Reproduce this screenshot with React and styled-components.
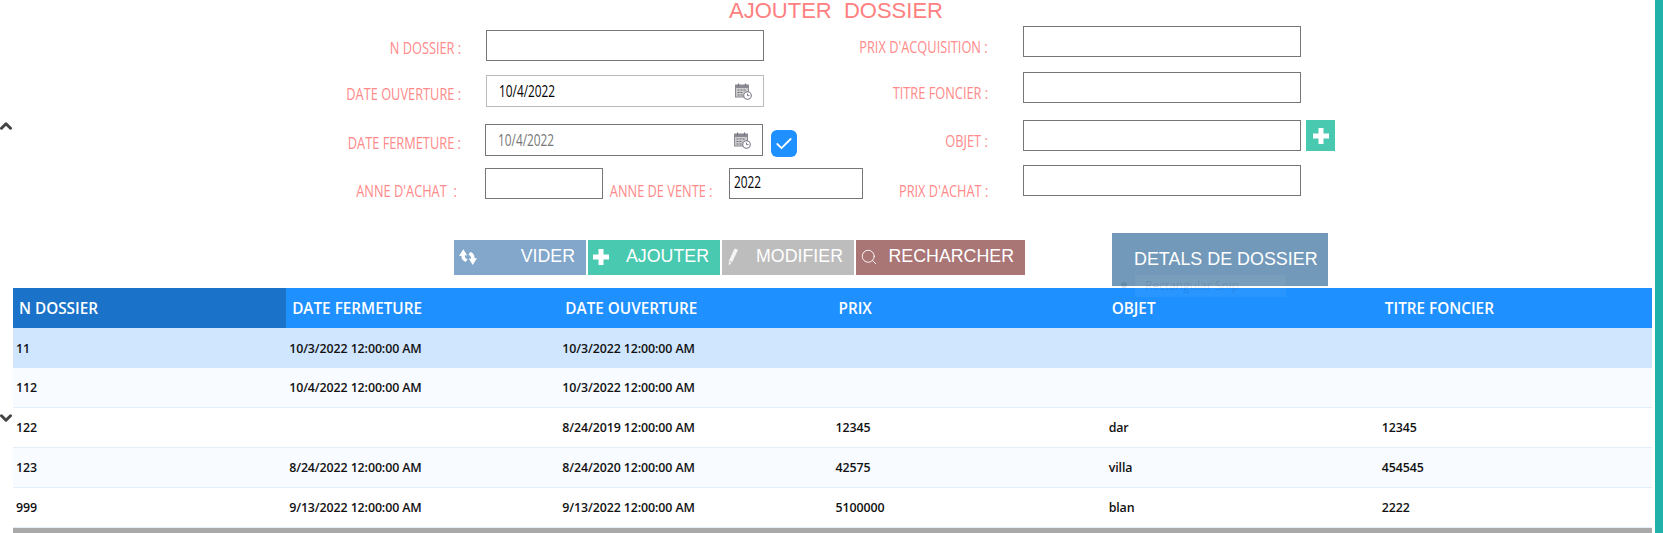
import React from "react";
import styled, { createGlobalStyle } from "styled-components";
import { ChevronUp, ChevronDown, Check, Search } from "lucide-react";

const Global = createGlobalStyle`
  html, body { margin: 0; padding: 0; background: #fff; overflow: hidden; }
  * { box-sizing: border-box; }
`;

const Page = styled.div`
  position: relative;
  width: 1663px;
  height: 533px;
  overflow: hidden;
  padding-right: 8px;
`;
const SideBar = styled.div`
  position: absolute; top: 0; right: 0; bottom: 0; width: 8px; background: #20b2aa;
`;
const Collapse = styled.div`
  position: absolute; left: -3px; top: ${p => p.$top}px; color: #444; line-height: 0;
`;
const Title = styled.h1`
  margin: 0; height: 26px; padding-left: 17px; text-align: center;
  font: 400 22px/22px "Liberation Sans", Arial, sans-serif; color: #ff8080; white-space: pre;
`;
const Form = styled.div`
  display: flex; height: 207px; padding-left: 340px;
`;
const LeftCol = styled.div`width: 530px; display: flex; flex-direction: column;`;
const RightCol = styled.div`width: 470px; display: flex; flex-direction: column;`;
const Row = styled.div`
  display: flex; align-items: flex-start; margin-top: ${p => p.$mt || 0}px;
`;
const Label = styled.label`
  display: flex; justify-content: flex-end;
  font: 400 16.5px/18px "Open Sans", sans-serif; color: #ff8a8a; white-space: pre;
  width: ${p => p.$w}px; padding-top: ${p => p.$pt}px; margin-right: ${p => p.$mr}px; flex: none;
`;
const LabelText = styled.span`
  display: inline-block; flex: none; transform: scaleX(.775); transform-origin: right center;
`;
const ValueText = styled.span`
  display: inline-block; transform: scaleX(.76); transform-origin: left center;
  font: 400 15.6px "Open Sans", sans-serif;
`;
const Field = styled.div`
  width: ${p => p.$w || 278}px; height: ${p => p.$h || 31}px; flex: none;
  border: 1px solid #767676; background: #fff; padding: 0 0 3px 4px; color: #000;
  display: flex; align-items: center;
`;
const DateBox = styled.div`
  width: 278px; height: 32px; flex: none; display: flex; align-items: center;
  justify-content: space-between; padding: 0 11px 0 12px;
  border: 1px solid ${p => (p.$muted ? "#767676" : "#bbb")}; margin-left: ${p => (p.$muted ? -1 : 0)}px;
  color: ${p => (p.$muted ? "#777" : "#000")};
`;
const Tick = styled.div`
  width: 26px; height: 27px; margin: 6px 0 0 8px; border-radius: 6px; background: #1e90ff;
  display: flex; align-items: center; justify-content: center; color: #fff;
`;
const AddBtn = styled.div`
  width: 29px; height: 31px; margin-left: 5px; background: #48c9b0;
  display: flex; align-items: center; justify-content: center;
`;
const Actions = styled.div`
  display: flex; align-items: flex-start; height: 53px; margin-bottom: 2px; padding-left: 454px;
`;
const ActionBtn = styled.div`
  width: ${p => p.$w}px; height: 35px; margin: 7px 2px 0 0; flex: none;
  background: ${p => p.$bg}; color: #fff; display: flex; align-items: center;
  justify-content: space-between; padding: 0 ${p => p.$pr}px 2px ${p => p.$pl}px;
  font: 400 17.8px "Liberation Sans", Arial, sans-serif;
`;
const DetailsBtn = styled.div`
  position: relative; width: 216px; height: 53px; margin-left: 85px; background: #7299b9; color: #fff;
  padding: 15px 0 0 22px; font: 400 17.9px/22px "Liberation Sans", Arial, sans-serif; white-space: nowrap;
`;
const SnipHint = styled.div`
  position: absolute; left: 23px; top: 42px; width: 151px; height: 22px; padding-left: 10px;
  background: rgba(255,255,255,.05); color: rgba(0,30,60,.13);
  font: 400 12px/22px "Open Sans", sans-serif; z-index: 2;
`;
const SnipDot = styled.div`
  position: absolute; left: 9px; top: 49px; width: 6px; height: 6px; border-radius: 50%;
  background: rgba(0,30,60,.12); z-index: 2;
`;
const Table = styled.div`margin-left: 13px; width: 1639px;`;
const GridRow = styled.div`
  display: grid; grid-template-columns: repeat(6, 1fr); height: 40px; align-items: center;
  background: ${p => p.$bg}; border-bottom: ${p => (p.$line ? "1px solid #e3eefb" : "none")};
  font: 600 12.4px "Open Sans", sans-serif; color: #111; letter-spacing: -.1px;
`;
const Body = styled.div`padding-left: 3px; white-space: nowrap;`;
const HeadRow = styled(GridRow)`
  background: #1e90ff; color: #fff; font-size: 15.3px; letter-spacing: 0;
`;
const Head = styled.div`
  height: 100%; display: flex; align-items: center; padding: 0 0 0 6px;
  background: ${p => (p.$active ? "#1a73c9" : "transparent")};
`;
const Scroll = styled.div`height: 5px; margin-left: 13px; width: 1639px; background: #a9a9a9;`;

const CalIcon = () => (
  <svg width="17" height="17" viewBox="0 0 17 17">
    <rect x="0.5" y="2" width="13" height="12" fill="#ccc" stroke="#8a8a92" />
    <rect x="0.5" y="2" width="13" height="3" fill="#8a8a92" />
    <path d="M3.5 0.5v3M10.5 0.5v3" stroke="#77777f" strokeWidth="1.2" />
    <path d="M2.5 7h2M5.5 7h2M8.5 7h2M2.5 9.5h2M5.5 9.5h2M2.5 12h2M5.5 12h2" stroke="#6f6f78" />
    <circle cx="12.5" cy="12.5" r="3.8" fill="#fff" stroke="#77778a" strokeWidth="1.1" />
    <path d="M12.5 10.5v2.2h2" fill="none" stroke="#77778a" />
  </svg>
);
const Plus = ({ size, bar }) => (
  <svg width={size} height={size} viewBox="0 0 16 16">
    <path d="M8 0v16M0 8h16" stroke="#fff" strokeWidth={bar} />
  </svg>
);
const Refresh = () => (
  <svg width="18" height="18" viewBox="0 0 16 16" fill="#fff">
    <path d="M0 7 3.8 1 7.4 6.6 5.2 6.4C5 8 6 9.4 7.6 10L6 12.4C3.4 11.6 2 9.6 2.2 6.8Z" />
    <path d="M16 9 12.2 15 8.6 9.4 10.8 9.6C11 8 10 6.6 8.4 6L10 3.6C12.6 4.4 14 6.4 13.8 9.2Z" />
  </svg>
);
const Pencil = () => (
  <svg width="11" height="18" viewBox="0 0 11 18">
    <path d="M6.6 0.5 10 1.8 4 14.6 0.8 17.5 0.8 13Z" fill="#fff" opacity=".85" />
    <path d="M1.2 13.2 4 14.6" stroke="#bdbdbd" />
  </svg>
);

const rows = [
  ["11", "10/3/2022 12:00:00 AM", "10/3/2022 12:00:00 AM", "", "", ""],
  ["112", "10/4/2022 12:00:00 AM", "10/3/2022 12:00:00 AM", "", "", ""],
  ["122", "", "8/24/2019 12:00:00 AM", "12345", "dar", "12345"],
  ["123", "8/24/2022 12:00:00 AM", "8/24/2020 12:00:00 AM", "42575", "villa", "454545"],
  ["999", "9/13/2022 12:00:00 AM", "9/13/2022 12:00:00 AM", "5100000", "blan", "2222"],
];
const rowBg = ["#d0e6fe", "#f8fbff", "#fff", "#f8fbff", "#fff"];
const heads = ["N DOSSIER", "DATE FERMETURE", "DATE OUVERTURE", "PRIX", "OBJET", "TITRE FONCIER"];

const FormLabel = ({ children, ...rest }) => (
  <Label {...rest}><LabelText>{children}</LabelText></Label>
);

export default function App() {
  return (
    <Page>
      <Global />
      <SideBar />
      <Collapse $top={117}><ChevronUp size={18} strokeWidth={4} /></Collapse>
      <Collapse $top={409}><ChevronDown size={18} strokeWidth={4} /></Collapse>
      <Title>{"AJOUTER  DOSSIER"}</Title>
      <Form>
        <LeftCol>
          <Row $mt={4}>
            <FormLabel $w={121} $pt={9} $mr={25}>N DOSSIER :</FormLabel>
            <Field />
          </Row>
          <Row $mt={14}>
            <FormLabel $w={121} $pt={10} $mr={25}>DATE OUVERTURE :</FormLabel>
            <DateBox><ValueText>10/4/2022</ValueText><CalIcon /></DateBox>
          </Row>
          <Row $mt={17}>
            <FormLabel $w={121} $pt={10} $mr={25}>DATE FERMETURE :</FormLabel>
            <DateBox $muted><ValueText>10/4/2022</ValueText><CalIcon /></DateBox>
            <Tick><Check size={20} strokeWidth={2.2} /></Tick>
          </Row>
          <Row $mt={11}>
            <FormLabel $w={117} $pt={14} $mr={28}>{"ANNE D'ACHAT  :"}</FormLabel>
            <Field $w={118} />
            <FormLabel $w={109} $pt={14} $mr={17}>ANNE DE VENTE :</FormLabel>
            <Field $w={134}><ValueText>2022</ValueText></Field>
          </Row>
        </LeftCol>
        <RightCol>
          <Row>
            <FormLabel $w={118} $pt={12} $mr={35}>{"PRIX D'ACQUISITION :"}</FormLabel>
            <Field />
          </Row>
          <Row $mt={15}>
            <FormLabel $w={118} $pt={12} $mr={35}>TITRE FONCIER :</FormLabel>
            <Field />
          </Row>
          <Row $mt={17}>
            <FormLabel $w={118} $pt={12} $mr={35}>OBJET :</FormLabel>
            <Field />
            <AddBtn><Plus size={16} bar={5} /></AddBtn>
          </Row>
          <Row $mt={14}>
            <FormLabel $w={118} $pt={17} $mr={35}>{"PRIX D'ACHAT :"}</FormLabel>
            <Field />
          </Row>
        </RightCol>
      </Form>
      <Actions>
        <ActionBtn $w={132} $bg="#82a7ca" $pl={5} $pr={11}><Refresh />VIDER</ActionBtn>
        <ActionBtn $w={132} $bg="#48c9b0" $pl={5} $pr={11}><Plus size={16} bar={5} />AJOUTER</ActionBtn>
        <ActionBtn $w={132} $bg="#bdbdbd" $pl={6} $pr={11}><Pencil />MODIFIER</ActionBtn>
        <ActionBtn $w={169} $bg="#a97575" $pl={4} $pr={11}><Search size={18} strokeWidth={1.2} />RECHARCHER</ActionBtn>
        <DetailsBtn>
          DETALS DE DOSSIER
          <SnipDot />
          <SnipHint>Rectangular Snip</SnipHint>
        </DetailsBtn>
      </Actions>
      <Table>
        <HeadRow>
          {heads.map((h, i) => <Head key={h} $active={i === 0}>{h}</Head>)}
        </HeadRow>
        {rows.map((r, i) => (
          <GridRow key={r[0]} $bg={rowBg[i]} $line={i > 0}>
            {r.map((c, j) => <Body key={j}>{c}</Body>)}
          </GridRow>
        ))}
      </Table>
      <Scroll />
    </Page>
  );
}
